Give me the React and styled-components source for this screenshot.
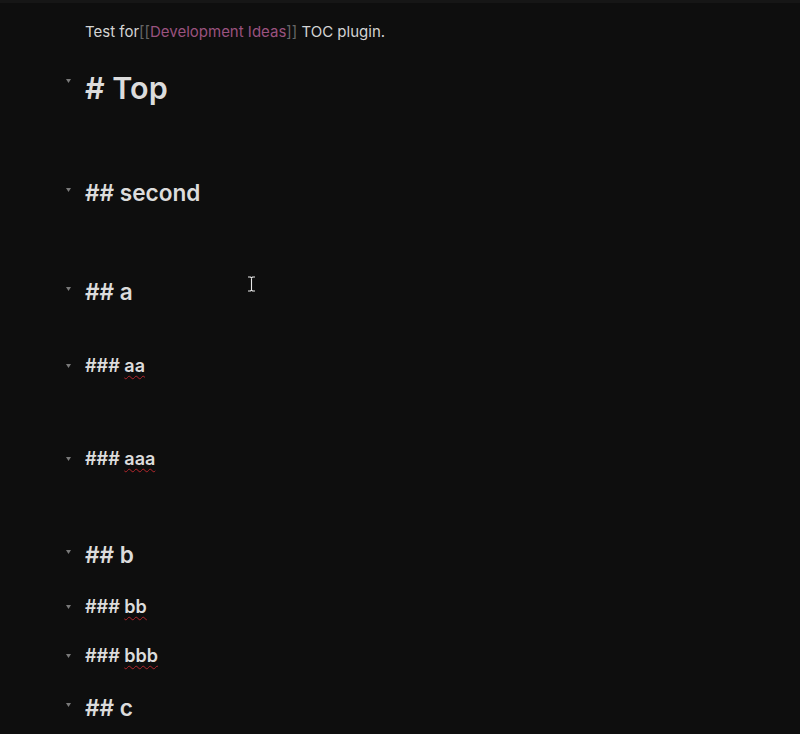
import React from "react";
import styled, { createGlobalStyle } from "styled-components";

const Global = createGlobalStyle`
  html, body { margin: 0; padding: 0; background: #0e0e0e; }
  body { font-family: Inter, "Noto Sans", sans-serif; color: #dadada; }
`;

const Page = styled.div`
  position: relative;
  width: 800px;
  height: 734px;
  overflow: hidden;
  background: #0e0e0e;
  border-top: 3px solid #161616;
  box-sizing: border-box;
`;

const Content = styled.div`
  display: flex;
  flex-direction: column;
  padding-left: 60px;
  padding-top: 17px;
`;

const Row = styled.div`
  display: flex;
  align-items: center;
  height: ${p => p.$h}px;
  margin-top: ${p => p.$gap || 0}px;
`;

const Fold = styled.div`
  width: 25px;
  flex: none;
  display: flex;
  justify-content: flex-start;
  padding-left: 6px;
  box-sizing: border-box;
  align-self: flex-start;
  padding-top: ${p => p.$top}px;
`;

const Tri = () => (
  <svg width="5" height="4" viewBox="0 0 5 4">
    <path d="M0 0 L5 0 L2.5 4 Z" fill="#7a7a7a" />
  </svg>
);

const Para = styled.div`
  font-size: 15px;
  line-height: 24px;
  color: #d4d4d4;
  padding-left: 25px;
`;

const Bracket = styled.span`
  color: #666666;
`;

const LinkText = styled.span`
  color: #9a527f;
`;

const Heading = styled.div`
  font-weight: 600;
  color: #dcdcdc;
  font-size: ${p => p.$size}px;
  line-height: ${p => p.$h}px;
`;

const Misspelled = styled.span`
  text-decoration: underline wavy #b3262b;
  text-decoration-thickness: 1px;
  text-underline-offset: 3px;
`;

const Cursor = styled.svg`
  position: absolute;
  left: 247px;
  top: 273px;
`;

const levels = {
  1: { size: 30.5, h: 40, tri: 11 },
  2: { size: 22.6, h: 34, tri: 12 },
  3: { size: 18, h: 28, tri: 12 },
};

const rows = [
  { level: 1, gap: 24, hash: "#", text: "Top" },
  { level: 2, gap: 68, hash: "##", text: "second" },
  { level: 2, gap: 65, hash: "##", text: "a" },
  { level: 3, gap: 43, hash: "###", text: "aa", spell: true },
  { level: 3, gap: 65, hash: "###", text: "aaa", spell: true },
  { level: 2, gap: 65, hash: "##", text: "b" },
  { level: 3, gap: 21, hash: "###", text: "bb", spell: true },
  { level: 3, gap: 21, hash: "###", text: "bbb", spell: true },
  { level: 2, gap: 21, hash: "##", text: "c" },
];

export default function App() {
  return (
    <Page>
      <Global />
      <Content>
        <Row $h={24}>
          <Para>
            Test for<Bracket>[[</Bracket>
            <LinkText>Development Ideas</LinkText>
            <Bracket>]]</Bracket> TOC plugin.
          </Para>
        </Row>
        {rows.map((r, i) => {
          const L = levels[r.level];
          return (
            <Row key={i} $h={L.h} $gap={r.gap}>
              <Fold $top={L.tri}>
                <Tri />
              </Fold>
              <Heading $size={L.size} $h={L.h}>
                {r.hash}{" "}
                {r.spell ? <Misspelled>{r.text}</Misspelled> : r.text}
              </Heading>
            </Row>
          );
        })}
      </Content>
      <Cursor width="9" height="16" viewBox="0 0 9 16">
        <path d="M1 1 H3.5 L4.5 2 L5.5 1 H8 M4.5 2 V14 M1 15 H3.5 L4.5 14 L5.5 15 H8" stroke="#111" strokeWidth="2.4" fill="none" />
        <path d="M1 1 H3.5 L4.5 2 L5.5 1 H8 M4.5 2 V14 M1 15 H3.5 L4.5 14 L5.5 15 H8" stroke="#e8e8e8" strokeWidth="1.1" fill="none" />
      </Cursor>
    </Page>
  );
}
